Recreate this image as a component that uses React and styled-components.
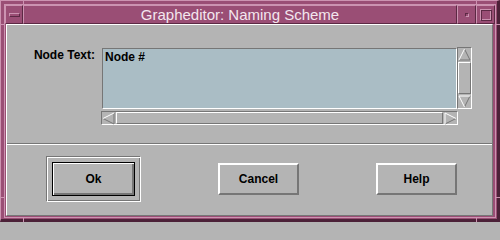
import React from 'react'
import styled, { createGlobalStyle } from 'styled-components'

const mauve = '#9a4e75'
const mauveLight = '#cc93b1'
const mauveDark = '#4c2138'
const gray = '#b4b4b4'
const shadow = '#767676'
const field = '#aabdc5'

const GlobalStyle = createGlobalStyle`
  html, body {
    margin: 0;
    padding: 0;
    background: ${gray};
  }
  * {
    box-sizing: border-box;
  }
`

const arrowPaths = {
  up: { light: 'M6.5 1 L1 12', dark: 'M6.5 1 L12 12 L1 12' },
  down: { light: 'M1 1 L12 1 M1 1 L6.5 12', dark: 'M12 1 L6.5 12' },
  left: { light: 'M1 6.5 L12 1', dark: 'M1 6.5 L12 12 L12 1' },
  right: { light: 'M1 1 L1 12 M1 1 L12 6.5', dark: 'M12 6.5 L1 12' },
}

const Arrow = ({ dir }) => {
  const p = arrowPaths[dir]
  return (
    <ArrowBox>
      <svg width="13" height="13" viewBox="0 0 13 13">
        <path d={p.dark} fill="none" stroke={shadow} strokeWidth="1" />
        <path d={p.light} fill="none" stroke="#fff" strokeWidth="1" />
      </svg>
    </ArrowBox>
  )
}

// resize-corner marks on the window border
const ticks = [
  { x: 23, y: 0, w: 1, h: 5 },
  { x: 476, y: 0, w: 1, h: 5 },
  { x: 23, y: 217, w: 1, h: 5 },
  { x: 476, y: 217, w: 1, h: 5 },
  { x: 0, y: 24, w: 5, h: 1 },
  { x: 0, y: 197, w: 5, h: 1 },
  { x: 495, y: 24, w: 5, h: 1 },
  { x: 495, y: 197, w: 5, h: 1 },
]

const App = () => {
  return (
    <>
      <GlobalStyle />
      <Frame>
        {ticks.map((t, i) => (
          <Tick key={i} style={{ left: t.x, top: t.y, width: t.w, height: t.h }} />
        ))}
        <Inner>
          <TitleBar>
            <TitleButton $w={18}><MenuBar /></TitleButton>
            <TitleLabel>Grapheditor: Naming Scheme</TitleLabel>
            <TitleButton $w={19}><MinIcon /></TitleButton>
            <TitleButton $w={19}><MaxIcon /></TitleButton>
          </TitleBar>
          <Client>
            <Form>
              <Label>Node Text:</Label>
              <TextArea>Node #</TextArea>
              <VScroll>
                <Arrow dir="up" />
                <VThumb />
                <Arrow dir="down" />
              </VScroll>
              <HScroll>
                <Arrow dir="left" />
                <HThumb />
                <Arrow dir="right" />
              </HScroll>
            </Form>
            <Separator />
            <ButtonRow>
              <DefaultRing>
                <PushButton $default>Ok</PushButton>
              </DefaultRing>
              <PushButton>Cancel</PushButton>
              <PushButton>Help</PushButton>
            </ButtonRow>
          </Client>
        </Inner>
      </Frame>
    </>
  )
}

const Frame = styled.div`
  position: relative;
  width: 500px;
  height: 222px;
  display: flex;
  background: ${mauve};
  border-style: solid;
  border-width: 1px 3px 3px 1px;
  border-color: ${mauveLight} ${mauveDark} ${mauveDark} ${mauveLight};
  padding: 3px 1px 1px 3px;
`

const Tick = styled.div`
  position: absolute;
  margin: -1px 0 0 -1px;
  background: ${mauveLight};
`

const Inner = styled.div`
  flex: 1;
  display: flex;
  flex-direction: column;
  border: 1px solid ${mauveLight};
`

const TitleBar = styled.div`
  display: flex;
  height: 19px;
  flex-shrink: 0;
`

const TitleButton = styled.div`
  width: ${(p) => p.$w}px;
  display: flex;
  align-items: center;
  justify-content: center;
  border-style: solid;
  border-width: 1px;
  border-color: ${mauveLight} #5c2944 #5c2944 ${mauveLight};
`

const TitleLabel = styled.div`
  flex: 1;
  text-align: center;
  color: #f3e6ee;
  font-family: "Liberation Sans", Arial, sans-serif;
  font-size: 15px;
  line-height: 17px;
  border-style: solid;
  border-width: 1px;
  border-color: ${mauveLight} #5c2944 #5c2944 ${mauveLight};
  white-space: nowrap;
`

const MenuBar = styled.div`
  width: 11px;
  height: 4px;
  margin-left: 1px;
  border-style: solid;
  border-width: 1px;
  border-color: ${mauveLight} #5c2944 #5c2944 ${mauveLight};
`

const MinIcon = styled.div`
  width: 4px;
  height: 4px;
  border-style: solid;
  border-width: 1px;
  border-color: #5c2944 ${mauveLight} ${mauveLight} #5c2944;
`

const MaxIcon = styled.div`
  width: 12px;
  height: 12px;
  border-style: solid;
  border-width: 1px;
  border-color: ${mauveLight} #5c2944 #5c2944 ${mauveLight};
  box-shadow: inset 1px 1px 0 #5c2944, inset -1px -1px 0 ${mauveLight};
`

const Client = styled.div`
  flex: 1;
  display: flex;
  flex-direction: column;
  margin: 0 2px 1px 1px;
  background: ${gray};
  border-style: solid;
  border-width: 1px;
  border-color: #ffffff ${shadow} ${shadow} #ffffff;
  font-family: "Liberation Sans", Arial, sans-serif;
`

const Form = styled.div`
  display: grid;
  grid-template-columns: 95px 355px 15px;
  grid-template-rows: 62px 14px;
  padding-top: 23px;
`

const Label = styled.div`
  padding-right: 7px;
  text-align: right;
  font-size: 12px;
  font-weight: bold;
  line-height: 14px;
  color: #000;
`

const TextArea = styled.div`
  height: 61px;
  background: ${field};
  border-style: solid;
  border-width: 1px;
  border-color: ${shadow} #ffffff #ffffff ${shadow};
  padding: 1px 2px;
  font-size: 12px;
  font-weight: bold;
  line-height: 14px;
  color: #000;
`

const ScrollTrough = styled.div`
  display: flex;
  background: ${gray};
  border-style: solid;
  border-width: 1px;
  border-color: ${shadow} #ffffff #ffffff ${shadow};
`

const VScroll = styled(ScrollTrough)`
  flex-direction: column;
  justify-content: space-between;
  margin-top: -1px;
  height: 62px;
`

const HScroll = styled(ScrollTrough)`
  grid-column: 2;
  margin-left: -1px;
  width: 357px;
  height: 14px;
  margin-top: 1px;
`

const ArrowBox = styled.div`
  width: 13px;
  height: 13px;
  flex-shrink: 0;
  display: flex;
  svg {
    display: block;
  }
`

const VThumb = styled.div`
  flex: 1;
  margin: 1px 0;
  border-style: solid;
  border-width: 1px;
  border-color: #ffffff ${shadow} ${shadow} #ffffff;
`

const HThumb = styled.div`
  flex: 1;
  margin: 0 1px;
  border-style: solid;
  border-width: 1px;
  border-color: #ffffff ${shadow} ${shadow} #ffffff;
`

const Separator = styled.div`
  margin-top: 19px;
  height: 2px;
  border-top: 1px solid ${shadow};
  border-bottom: 1px solid #ffffff;
`

const ButtonRow = styled.div`
  display: flex;
  align-items: center;
  justify-content: space-between;
  padding: 11px 35px 0 39px;
`

const DefaultRing = styled.div`
  padding: 5px;
  border-style: solid;
  border-width: 1px;
  border-color: ${shadow} #ffffff #ffffff ${shadow};
  box-shadow: inset 1px 1px 0 #ffffff, inset -1px -1px 0 ${shadow};
`

const PushButton = styled.button`
  width: ${(p) => (p.$default ? 83 : 81)}px;
  height: ${(p) => (p.$default ? 34 : 32)}px;
  padding: 0;
  background: ${gray};
  color: #000;
  font-family: "Liberation Sans", Arial, sans-serif;
  font-size: 12px;
  font-weight: bold;
  border-style: solid;
  border-width: ${(p) => (p.$default ? '1px' : '2px')};
  border-color: ${(p) =>
    p.$default ? '#000' : `#ffffff ${shadow} ${shadow} #ffffff`};
  box-shadow: ${(p) =>
    p.$default
      ? `inset 1px 1px 0 #ffffff, inset -2px -2px 0 ${shadow}`
      : 'none'};
`

export default App
